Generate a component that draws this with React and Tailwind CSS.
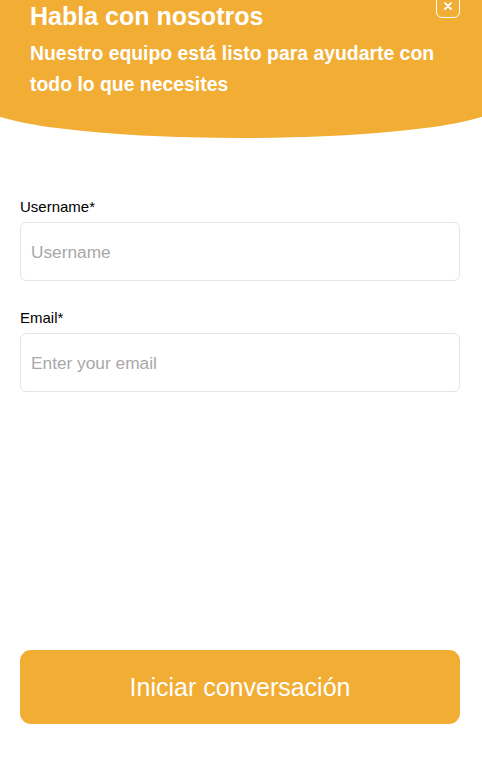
import React from "react";

export default function App() {
  return (
    <div className="w-[482px] h-[758px] overflow-hidden bg-white flex flex-col font-['Liberation_Sans',Arial,sans-serif]">
      <header className="relative -ml-[19px] w-[520px] h-[138px] shrink-0 bg-[#f2ad34] rounded-b-[50%_34px] pl-[49px] pr-[56px] text-white">
        <h1 className="mt-[1px] text-[25px] leading-[30px] font-bold">Habla con nosotros</h1>
        <p className="mt-[7px] text-[19.4px] leading-[30.5px] font-bold">
          Nuestro equipo está listo para ayudarte con todo lo que necesites
        </p>
        <button className="absolute left-[455px] -top-[6px] w-6 h-6 rounded-[6px] border-[1.5px] border-white flex items-center justify-center">
          <svg width="10" height="10" viewBox="0 0 10 10" fill="none" stroke="white" strokeWidth="1.8" strokeLinecap="round">
            <path d="M2 2l6 6M8 2l-6 6" />
          </svg>
        </button>
      </header>

      <form className="flex flex-col flex-1 pl-5 pr-[22px] pt-[59px] pb-[34px]">
        <label className="text-[15px] leading-5 text-black">Username*</label>
        <input
          placeholder="Username"
          className="mt-[5px] h-[59px] w-full rounded-md border border-[#e6e6e6] px-[10px] pt-[2px] text-[17.3px] outline-none placeholder:text-[#a8a8a8]"
        />
        <label className="mt-[27px] text-[15px] leading-5 text-black">Email*</label>
        <input
          placeholder="Enter your email"
          className="mt-[5px] h-[59px] w-full rounded-md border border-[#e6e6e6] px-[10px] pt-[2px] text-[17.3px] outline-none placeholder:text-[#a8a8a8]"
        />
        <button
          type="button"
          className="mt-auto h-[74px] w-full rounded-[11px] bg-[#f2ad34] text-white text-[25px] pt-[2px]"
        >
          Iniciar conversación
        </button>
      </form>
    </div>
  );
}
